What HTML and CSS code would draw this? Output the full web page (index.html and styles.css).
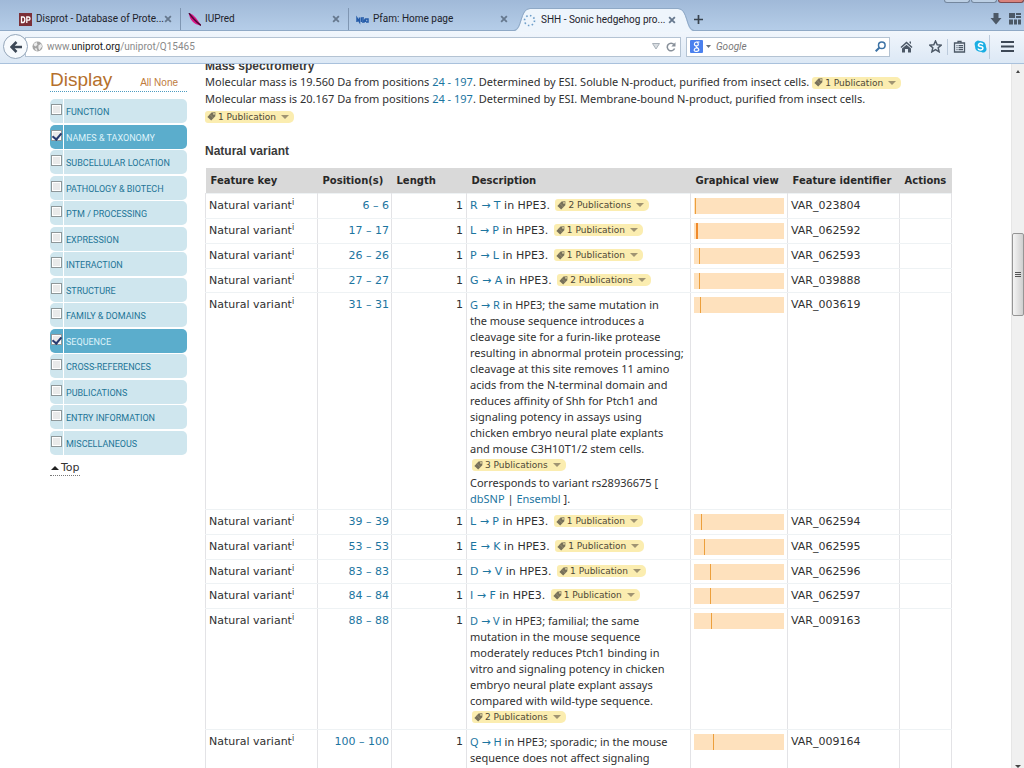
FILE: index.html
```html
<!DOCTYPE html>
<html lang="en">
<head>
<meta charset="utf-8">
<title>SHH - Sonic hedgehog protein</title>
<link rel="stylesheet" href="styles.css">
</head>
<body>
<svg class="defs" aria-hidden="true">
  <symbol id="tag" viewBox="0 0 9 9"><path d="M4.500 .6 8.400 .3 8.300 4.200 4.200 8.500 .4 5Z" fill="#77705a"/><path d="M3 2.500 6.300 6" stroke="#b3a67e" stroke-width=".5"/><circle cx="7" cy="1.900" r=".8" fill="#fbedb0"/></symbol>
  <symbol id="down" viewBox="0 0 8 4"><path d="M0 0H8L4 4Z" fill="#a09472"/></symbol>
  <symbol id="x" viewBox="0 0 7 7"><path d="M1 1 6 6M6 1 1 6" stroke="#66788e" stroke-width="1.600"/></symbol>
</svg>
<header class="browser">
  <div class="tabstrip">
    <div class="winbtns"><i></i><i></i><i class="close"></i></div>
    <div class="tab"><svg class="fav" viewBox="0 0 13 13"><rect width="13" height="13" fill="#7c3038"/><path d="M2.500 4V9.500H4Q5.800 9.500 5.800 6.700T4 4ZM7.800 10V4H9.500Q11 4 11 5.600T9.500 7.200H8" fill="none" stroke="#fff" stroke-width="1.300"/></svg><span>Disprot - Database of Prote...</span><button aria-label="Close tab"><svg><use href="#x"/></svg></button></div>
    <div class="tab"><svg class="fav" viewBox="0 0 13 13"><path d="M1 0Q5 1 8 5L13 12Q9 13 5 9T1 0Z" fill="#dc1688"/><path d="M1 0Q5 6 13 12.500" stroke="#4b0a35" fill="none" stroke-width="1.400"/></svg><span>IUPred</span><button aria-label="Close tab"><svg><use href="#x"/></svg></button></div>
    <div class="tab"><svg class="fav" viewBox="0 0 13 13"><path d="M1 9V5L3.500 9V4.500M5.500 9V5H8M5.500 7H8V9H6M9.500 9V6H12V9H10" fill="none" stroke="#245ba8" stroke-width="1.500"/></svg><span>Pfam: Home page</span><button aria-label="Close tab"><svg><use href="#x"/></svg></button></div>
    <div class="tab active">
      <svg class="curve" viewBox="0 0 16 24"><path d="M0 24V23C9 23 6 1 16 1V24Z" fill="#eef5fc"/><path d="M0 22.500C8 22 6 .5 16 .5" fill="none" stroke="#8fa9c6"/></svg>
      <div class="tabbody"><svg class="fav" viewBox="0 0 13 13"><circle cx="6.500" cy="6.500" r="5" fill="none" stroke="#6e9fca" stroke-width="1.700" stroke-dasharray="1.500 2.400"/></svg><span>SHH - Sonic hedgehog pro...</span><button aria-label="Close tab"><svg><use href="#x"/></svg></button></div>
      <svg class="curve" viewBox="0 0 16 24"><path d="M16 24V23C7 23 10 1 0 1V24Z" fill="#eef5fc"/><path d="M16 22.500C8 22 10 .5 0 .5" fill="none" stroke="#8fa9c6"/></svg>
    </div>
    <button class="newtab" aria-label="New tab"><svg viewBox="0 0 9 9"><path d="M4.500 0V9M0 4.500H9" stroke="#39434e" stroke-width="1.700"/></svg></button>
    <div class="striptools">
      <svg viewBox="0 0 12 12"><path d="M3.500 0H8.500V5H11.500L6 11.500 .5 5H3.500Z" fill="#4c5866"/></svg>
      <svg viewBox="0 0 12 12"><path d="M0 0H6V5H0ZM7 0H12V2H7ZM7 3H12V5H7ZM0 6.500H4V11.500H0ZM5 6.500H8V11.500H5ZM9 6.500H12V11.500H9Z" fill="#4c5866"/></svg>
    </div>
  </div>
  <div class="navbar">
    <button class="back" aria-label="Back"><svg viewBox="0 0 12 12"><path d="M6.500 1 1.500 6 6.500 11M1.500 6H12" fill="none" stroke="#3d4856" stroke-width="2.600"/></svg></button>
    <div class="urlbox">
      <svg class="globe" viewBox="0 0 12 12"><circle cx="6" cy="6" r="5.500" fill="#a4a4a4"/><path d="M2 3 5 1 6 4 4 6 2 5ZM7 5 10 3 11 6 8 10 7 8ZM3 8 5 8 6 11 4 10Z" fill="#ececec"/></svg>
      <span class="url">www.<b>uniprot.org</b>/uniprot/Q15465</span>
      <svg class="drop" viewBox="0 0 8 7"><path d="M.5 .5H7.500L4 6Z" fill="#d9dde1" stroke="#a8b0b8"/></svg>
      <svg class="reload" viewBox="0 0 10 10"><path d="M8 2.600A3.800 3.800 0 1 0 8.600 6.500" fill="none" stroke="#88909a" stroke-width="1.500"/><path d="M9.500 .3V4.500H5.300Z" fill="#88909a"/></svg>
    </div>
    <div class="searchbox">
      <svg class="goog" viewBox="0 0 13 13"><rect width="13" height="13" rx="1" fill="#4a80ee"/><path d="M9.500 2H6.300Q4.300 2.300 4.400 4.200T6.500 5.900 8.300 4 6.500 2M6.500 6Q5.500 7 7 7.600T8.800 9.600 6.500 11.300 4.200 9.800 6.800 8" fill="none" stroke="#fff" stroke-width="1.200"/></svg>
      <svg class="caret" viewBox="0 0 5 3"><path d="M0 0H5L2.500 3Z" fill="#68717b"/></svg>
      <input type="text" placeholder="Google" aria-label="Search">
      <svg class="mag" viewBox="0 0 11 11"><circle cx="6.800" cy="4.200" r="3.300" fill="none" stroke="#3c72a5" stroke-width="1.500"/><path d="M4.300 6.700 .7 10.300" stroke="#3c72a5" stroke-width="2"/></svg>
    </div>
    <div class="tools">
      <svg viewBox="0 0 13 13"><path d="M6.500 1.500 12.500 7 11.500 8 6.500 3.500 1.500 8 .5 7ZM9.500 1.500H11V4L9.500 3ZM6.500 4.700 11 8.500V12.500H8V9H5V12.500H2V8.500Z" fill="#4c5866"/></svg>
      <svg class="star" viewBox="0 0 13 13"><path d="M6.500 1 8.200 4.700 12.200 5.100 9.200 7.800 10.100 11.800 6.500 9.700 2.900 11.800 3.800 7.800 .8 5.100 4.800 4.700Z" fill="none" stroke="#4c5866" stroke-width="1.500"/></svg>
      <i class="sep"></i>
      <svg class="clip" viewBox="0 0 13 13"><path d="M1.500 3H11.500V12H1.500ZM5 3V1.300H8V3M3.500 5.700H4.500M5.500 5.700H10M3.500 7.700H4.500M5.500 7.700H10M3.500 9.700H4.500M5.500 9.700H10" fill="none" stroke="#4c5866" stroke-width="1.300"/></svg>
      <svg class="skype" viewBox="0 0 13 13"><path d="M3.800 .5Q5 .5 6 1 12 1 12 7 13.500 10.500 11 12 9 13 7.500 12 .8 12 1 6 -.5 2 3.800 .5Z" fill="#19aee3"/><path d="M9 4.500Q8 3.200 6.500 3.200T4.500 4.700 6.500 6.400 8.900 8.200 6.500 9.900 4.100 8.500" fill="none" stroke="#fff" stroke-width="1.500"/></svg>
      <i class="sep second"></i>
      <svg class="menu" viewBox="0 0 13 13"><path d="M0 2H13M0 6.500H13M0 11H13" stroke="#3d4856" stroke-width="2.200"/></svg>
    </div>
  </div>
</header>
<div class="viewport">
  <aside class="sidebar">
    <div class="sidehead"><h2>Display</h2><p><a href="#all">All</a> <a href="#none">None</a></p></div>
    <ul>
      <li><input type="checkbox" id="c1"><label for="c1">FUNCTION</label></li>
      <li class="on"><input type="checkbox" id="c2" checked><label for="c2">NAMES &amp; TAXONOMY</label></li>
      <li><input type="checkbox" id="c3"><label for="c3">SUBCELLULAR LOCATION</label></li>
      <li><input type="checkbox" id="c4"><label for="c4">PATHOLOGY &amp; BIOTECH</label></li>
      <li><input type="checkbox" id="c5"><label for="c5">PTM / PROCESSING</label></li>
      <li><input type="checkbox" id="c6"><label for="c6">EXPRESSION</label></li>
      <li><input type="checkbox" id="c7"><label for="c7">INTERACTION</label></li>
      <li><input type="checkbox" id="c8"><label for="c8">STRUCTURE</label></li>
      <li><input type="checkbox" id="c9"><label for="c9">FAMILY &amp; DOMAINS</label></li>
      <li class="on"><input type="checkbox" id="c10" checked><label for="c10">SEQUENCE</label></li>
      <li><input type="checkbox" id="c11"><label for="c11">CROSS-REFERENCES</label></li>
      <li><input type="checkbox" id="c12"><label for="c12">PUBLICATIONS</label></li>
      <li><input type="checkbox" id="c13"><label for="c13">ENTRY INFORMATION</label></li>
      <li><input type="checkbox" id="c14"><label for="c14">MISCELLANEOUS</label></li>
    </ul>
    <a class="top" href="#top"><svg viewBox="0 0 8 4"><path d="M0 4H8L4 0Z" fill="#222"/></svg>Top</a>
  </aside>
  <main>
    <h3 class="mass">Mass spectrometry</h3>
    <p>Molecular mass is 19.560 Da from positions <a href="#p">24 - 197</a>. Determined by ESI. Soluble N-product, purified from insect cells. <button class="pill"><svg class="t"><use href="#tag"/></svg>1 Publication<svg class="d"><use href="#down"/></svg></button></p>
    <p>Molecular mass is 20.167 Da from positions <a href="#p">24 - 197</a>. Determined by ESI. Membrane-bound N-product, purified from insect cells.<br><button class="pill"><svg class="t"><use href="#tag"/></svg>1 Publication<svg class="d"><use href="#down"/></svg></button></p>
    <h3 class="variant">Natural variant</h3>
    <table>
      <colgroup><col class="k"><col class="p"><col class="l"><col><col class="g"><col class="f"><col class="a"></colgroup>
      <thead><tr><th>Feature key</th><th>Position(s)</th><th>Length</th><th>Description</th><th>Graphical view</th><th>Feature identifier</th><th>Actions</th></tr></thead>
      <tbody>
      <tr><td>Natural variant<sup>i</sup></td><td><a href="#v">6 – 6</a></td><td>1</td><td><a href="#v">R → T</a> in HPE3. <button class="pill"><svg class="t"><use href="#tag"/></svg>2 Publications<svg class="d"><use href="#down"/></svg></button></td><td><div class="bar"><i style="margin-left:1px"></i></div></td><td>VAR_023804</td><td></td></tr>
      <tr><td>Natural variant<sup>i</sup></td><td><a href="#v">17 – 17</a></td><td>1</td><td><a href="#v">L → P</a> in HPE3. <button class="pill"><svg class="t"><use href="#tag"/></svg>1 Publication<svg class="d"><use href="#down"/></svg></button></td><td><div class="bar"><i class="hot" style="margin-left:2px"></i></div></td><td>VAR_062592</td><td></td></tr>
      <tr><td>Natural variant<sup>i</sup></td><td><a href="#v">26 – 26</a></td><td>1</td><td><a href="#v">P → L</a> in HPE3. <button class="pill"><svg class="t"><use href="#tag"/></svg>1 Publication<svg class="d"><use href="#down"/></svg></button></td><td><div class="bar"><i style="margin-left:5px"></i></div></td><td>VAR_062593</td><td></td></tr>
      <tr><td>Natural variant<sup>i</sup></td><td><a href="#v">27 – 27</a></td><td>1</td><td><a href="#v">G → A</a> in HPE3. <button class="pill"><svg class="t"><use href="#tag"/></svg>2 Publications<svg class="d"><use href="#down"/></svg></button></td><td><div class="bar"><i style="margin-left:5px"></i></div></td><td>VAR_039888</td><td></td></tr>
      <tr><td>Natural variant<sup>i</sup></td><td><a href="#v">31 – 31</a></td><td>1</td><td class="prose"><a href="#v">G → R</a> in HPE3; the same mutation in<br>the mouse sequence introduces a<br>cleavage site for a furin-like protease<br>resulting in abnormal protein processing;<br>cleavage at this site removes 11 amino<br>acids from the N-terminal domain and<br>reduces affinity of Shh for Ptch1 and<br>signaling potency in assays using<br>chicken embryo neural plate explants<br>and mouse C3H10T1/2 stem cells.<br><button class="pill"><svg class="t"><use href="#tag"/></svg>3 Publications<svg class="d"><use href="#down"/></svg></button><div class="corr">Corresponds to variant rs28936675 [<br><a href="#d">dbSNP</a> | <a href="#e">Ensembl</a> ].</div></td><td><div class="bar"><i style="margin-left:6px"></i></div></td><td>VAR_003619</td><td></td></tr>
      <tr><td>Natural variant<sup>i</sup></td><td><a href="#v">39 – 39</a></td><td>1</td><td><a href="#v">L → P</a> in HPE3. <button class="pill"><svg class="t"><use href="#tag"/></svg>1 Publication<svg class="d"><use href="#down"/></svg></button></td><td><div class="bar"><i style="margin-left:7px"></i></div></td><td>VAR_062594</td><td></td></tr>
      <tr><td>Natural variant<sup>i</sup></td><td><a href="#v">53 – 53</a></td><td>1</td><td><a href="#v">E → K</a> in HPE3. <button class="pill"><svg class="t"><use href="#tag"/></svg>1 Publication<svg class="d"><use href="#down"/></svg></button></td><td><div class="bar"><i style="margin-left:10px"></i></div></td><td>VAR_062595</td><td></td></tr>
      <tr><td>Natural variant<sup>i</sup></td><td><a href="#v">83 – 83</a></td><td>1</td><td><a href="#v">D → V</a> in HPE3. <button class="pill"><svg class="t"><use href="#tag"/></svg>1 Publication<svg class="d"><use href="#down"/></svg></button></td><td><div class="bar"><i style="margin-left:16px"></i></div></td><td>VAR_062596</td><td></td></tr>
      <tr><td>Natural variant<sup>i</sup></td><td><a href="#v">84 – 84</a></td><td>1</td><td><a href="#v">I → F</a> in HPE3. <button class="pill"><svg class="t"><use href="#tag"/></svg>1 Publication<svg class="d"><use href="#down"/></svg></button></td><td><div class="bar"><i style="margin-left:16px"></i></div></td><td>VAR_062597</td><td></td></tr>
      <tr><td>Natural variant<sup>i</sup></td><td><a href="#v">88 – 88</a></td><td>1</td><td class="prose"><a href="#v">D → V</a> in HPE3; familial; the same<br>mutation in the mouse sequence<br>moderately reduces Ptch1 binding in<br>vitro and signaling potency in chicken<br>embryo neural plate explant assays<br>compared with wild-type sequence.<br><button class="pill"><svg class="t"><use href="#tag"/></svg>2 Publications<svg class="d"><use href="#down"/></svg></button></td><td><div class="bar"><i style="margin-left:17px"></i></div></td><td>VAR_009163</td><td></td></tr>
      <tr><td>Natural variant<sup>i</sup></td><td><a href="#v">100 – 100</a></td><td>1</td><td class="prose"><a href="#v">Q → H</a> in HPE3; sporadic; in the mouse<br>sequence does not affect signaling</td><td><div class="bar"><i style="margin-left:19px"></i></div></td><td>VAR_009164</td><td></td></tr>
      </tbody>
    </table>
  </main>
  <div class="scroll"><svg viewBox="0 0 8 4"><path d="M2 4H6L4 1Z" fill="#444"/></svg><div class="thumb"><i></i><i></i><i></i></div><svg viewBox="0 0 8 4"><path d="M1 1H7L4 4Z" fill="#444"/></svg></div>
</div>
</body>
</html>
```
FILE: styles.css
```css
* { box-sizing: border-box; }
body { margin: 0; height: 100vh; display: flex; flex-direction: column; overflow: hidden; background: #fff; color: #303030; font: 11px/16px "DejaVu Sans", sans-serif; }
button { border: 0; padding: 0; background: none; font: inherit; color: inherit; }
a { color: #1c759f; text-decoration: none; }
h2, h3, p, ul { margin: 0; padding: 0; }
svg { display: block; flex: none; }
.defs { position: absolute; width: 0; height: 0; }

.browser { flex: none; font-family: Roboto, sans-serif; font-size: 10px; }
.tabstrip { height: 31px; display: flex; align-items: stretch; padding-top: 8px; background: linear-gradient(#a0b9d8, #b5cde8); border-bottom: 1px solid #8fa9c6; position: relative; }
.winbtns { position: absolute; right: 0; top: 0; display: flex; gap: 1px; }
.winbtns i { width: 26px; height: 3px; background: #bccfe4; border: 1px solid #74879e; border-top: 0; border-radius: 0 0 3px 3px; }
.winbtns .close { background: #d9827c; border-color: #7c4a50; }
.tab { flex: none; width: 168px; display: flex; align-items: center; gap: 4px; padding: 0 8px 0 7px; border-right: 1px solid #7f96b2; color: #1d232b; white-space: nowrap; }
.tab:nth-child(2) { width: 181px; padding-left: 19px; }
.tab:nth-child(4) { width: 165px; border-right: 0; padding-right: 6px; }
.tab span { flex: 1; min-width: 0; margin-right: -4px; }
.tab button svg { width: 8px; height: 8px; }
.fav { width: 13px; height: 13px; }
.tab.active { width: 180px; padding: 0; gap: 0; border: 0; margin-bottom: -1px; }
.curve { width: 16px; height: 24px; }
.tabbody { flex: 1; min-width: 0; height: 24px; display: flex; align-items: center; gap: 5px; padding-right: 2px; background: #eef5fc; border-top: 1px solid #8fa9c6; }
.tabbody .fav { margin-left: -7px; }
.newtab svg { width: 9px; height: 9px; }
.striptools { margin-left: auto; display: flex; align-items: center; gap: 7px; padding-right: 3px; }
.striptools svg { width: 12px; height: 12px; }
.navbar { height: 33px; display: flex; align-items: center; padding: 0 0 1px 3px; background: linear-gradient(#f1f6fc, #dce8f5); border-bottom: 1px solid #a9c1dc; }
.back { width: 25px; height: 25px; flex: none; border-radius: 50%; background: #f7fafd; border: 1px solid #94a6ba; display: grid; place-items: center; z-index: 1; }
.back svg { width: 12px; height: 12px; }
.urlbox, .searchbox { height: 20px; background: #fff; border: 1px solid #b4c3d3; display: flex; align-items: center; }
.urlbox { flex: 1; margin-left: -3px; padding: 0 4px 0 6px; gap: 9px; }
.globe { width: 11px; height: 11px; }
.url { flex: 1; margin-left: -5px; color: #8a8a8a; }
.url b { font-weight: 400; color: #1a1a1a; }
.drop { width: 8px; height: 7px; }
.reload { width: 10px; height: 10px; margin-left: -3px; }
.searchbox { width: 204px; margin-left: 5px; padding: 0 3px; gap: 5px; }
.goog { width: 13px; height: 13px; }
.caret { width: 5px; height: 3px; margin-left: -2px; }
.searchbox input { flex: 1; min-width: 0; border: 0; padding: 0; outline: 0; background: none; font: italic 10px Roboto, sans-serif; }
.searchbox input::placeholder { color: #777; opacity: 1; }
.mag { width: 11px; height: 11px; }
.tools { display: flex; align-items: center; padding: 0 10px; }
.tools svg { width: 13px; height: 13px; }
.tools .star { margin-left: 16px; }
.sep { width: 1px; height: 16px; margin: 0 5px; background: #bccbdc; }
.tools .skype { margin-left: 8px; }
.tools .sep.second { margin: 0 11px 0 2px; height: 24px; }

.viewport { flex: 1; min-height: 0; display: flex; overflow: hidden; }
.sidebar { flex: none; width: 137px; margin-left: 50px; }
.sidehead { height: 28px; margin-bottom: 7px; padding: 6px 9px 0 0; display: flex; justify-content: space-between; align-items: baseline; border-bottom: 1px dotted #4c9cc0; font-family: "Liberation Sans", sans-serif; }
.sidehead h2 { font-size: 19px; line-height: 20px; font-weight: 400; color: #b5702c; }
.sidehead p { font: 10px/16px "Liberation Sans", sans-serif; }
.sidehead a { color: #c07b3c; }
.sidebar ul { list-style: none; }
.sidebar li { height: 24px; display: flex; background: #cfe6ee; border-radius: 5px; margin-bottom: 1px; }
.sidebar li:nth-child(odd) { margin-bottom: 2px; }
.sidebar li.on { background: #5badcc; }
.sidebar input { appearance: none; width: 11px; height: 11px; margin: 5px 1px 0; border: 1px solid #8e9799; background: #e9eaea; box-shadow: inset 0 0 0 1px #fff; display: grid; place-items: center; }
.sidebar input:checked::before { content: ""; width: 4px; height: 7px; border: solid #263a70; border-width: 0 2px 2px 0; transform: rotate(40deg); }
.sidebar label { flex: 1; border-left: 1px solid #fff; padding: 1px 0 0 2px; font: 9px/24px Roboto, sans-serif; color: #1d7597; white-space: nowrap; }
.sidebar .on label { color: #dff3fa; }
.top { display: inline-flex; align-items: center; gap: 2px; margin-top: 5px; line-height: 14px; color: #333; border-bottom: 1px dotted #777; }
.top svg { width: 8px; height: 4px; margin-left: 1px; }

main { flex: 1; min-width: 0; margin-top: -6px; padding: 0 59px 0 18px; }
h3 { font: bold 12px/16px "Liberation Sans", sans-serif; color: #3a3a3a; }
.mass { margin-bottom: -1px; }
main p, .prose { font-family: "Noto Sans", "DejaVu Sans", sans-serif; }
main p { line-height: 17px; white-space: nowrap; }
.variant { margin: 19px 0 9px; }
.pill { display: inline-flex; align-items: center; height: 12px; margin-left: 0; padding: 0 5px 0 2px; border-radius: 3px 5px 5px 3px; background: #fbedb0; color: #4e4836; font: 9px/12px "DejaVu Sans", sans-serif; vertical-align: -1px; }
.pill .t { width: 9px; height: 9px; margin-right: 2px; }
.pill .d { width: 8px; height: 4px; margin-left: 5px; }
table { width: 100%; table-layout: fixed; border-collapse: collapse; }
.k { width: 112px; } .p { width: 74px; } .l { width: 75px; } .g { width: 97px; } .f { width: 112px; } .a { width: 52px; }
th { height: 25px; padding: 2px 0 0 5px; background: #d9d9d9; text-align: left; white-space: nowrap; color: #282828; font-size: 10px; }
td { padding: 4px 3px; vertical-align: top; white-space: nowrap; border: 1px solid #e3e3e6; border-top-color: #eef2f4; border-bottom-color: #eef2f4; }
tbody tr:nth-child(4n) td { padding-bottom: 3px; }
td:nth-child(2), td:nth-child(3) { text-align: right; }
td:nth-child(2) { padding-right: 2px; }
sup { font-size: 8px; line-height: 0; vertical-align: 4px; }
td .pill { margin-left: 2px; }
.corr { margin: 2px 0 -2px; }
.bar { height: 16px; background: #fee1bd; }
.bar i { display: block; width: 1px; height: 16px; background: #ec9f3c; }
.bar .hot { width: 2px; background: #f08a2c; }
.scroll { flex: none; width: 13px; display: flex; flex-direction: column; align-items: center; background: #f0f0f0; border-left: 1px solid #e6e6e6; padding-top: 5px; }
.scroll svg { width: 8px; height: 4px; }
.thumb { width: 12px; height: 83px; margin: 160px 0 auto; border: 1px solid #959595; border-radius: 2px; background: linear-gradient(90deg, #f5f5f5, #cfcfcf); display: flex; flex-direction: column; justify-content: center; align-items: center; gap: 1px; }
.thumb i { width: 6px; height: 1px; background: #555; }
```
